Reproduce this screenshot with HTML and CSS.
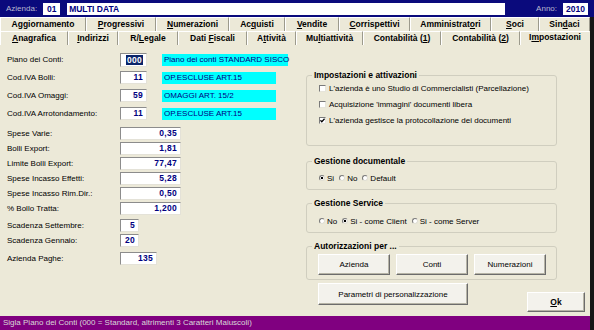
FILE: index.html
```html
<!DOCTYPE html>
<html lang="it">
<head>
<meta charset="utf-8">
<title>Impostazioni</title>
<link rel="stylesheet" href="styles.css">
</head>
<body>
<div class="app">
  <header class="topbar">
    <span class="tb-label">Azienda:</span>
    <span class="tb-box tb-code">01</span>
    <span class="tb-box tb-name">MULTI DATA</span>
    <span class="tb-label tb-anno">Anno:</span>
    <span class="tb-box tb-year">2010</span>
  </header>
  <div class="main">
    <nav class="tabs">
      <div class="tabrow r1">
        <span class="tab">Aggiornamento</span>
        <span class="tab"><u>P</u>rogressivi</span>
        <span class="tab"><u>N</u>umerazioni</span>
        <span class="tab">Ac<u>q</u>uisti</span>
        <span class="tab"><u>V</u>endite</span>
        <span class="tab"><u>C</u>orrispettivi</span>
        <span class="tab">Amministrat<u>o</u>ri</span>
        <span class="tab"><u>S</u>oci</span>
        <span class="tab">Sin<u>d</u>aci</span>
      </div>
      <div class="tabrow r2">
        <span class="tab"><u>A</u>nagrafica</span>
        <span class="tab"><u>I</u>ndirizzi</span>
        <span class="tab">R/<u>L</u>egale</span>
        <span class="tab">Dati <u>F</u>iscali</span>
        <span class="tab">A<u>t</u>tività</span>
        <span class="tab">Mu<u>l</u>tiattività</span>
        <span class="tab">Contabilità (<u>1</u>)</span>
        <span class="tab">Contabilità (<u>2</u>)</span>
        <span class="tab active">I<u>m</u>postazioni</span>
      </div>
    </nav>
    <main class="page">
      <section class="form">
        <div class="sec s1">
          <div class="row"><label>Piano dei Conti:</label><span class="fld w-code tall"><span class="hl">000</span></span><span class="desc long">Piano dei conti STANDARD SISCO</span></div>
          <div class="row"><label>Cod.IVA Bolli:</label><span class="fld w-code">11</span><span class="desc">OP.ESCLUSE ART.15</span></div>
          <div class="row"><label>Cod.IVA Omaggi:</label><span class="fld w-code">59</span><span class="desc">OMAGGI ART. 15/2</span></div>
          <div class="row"><label>Cod.IVA Arrotondamento:</label><span class="fld w-code">11</span><span class="desc">OP.ESCLUSE ART.15</span></div>
        </div>
        <div class="sec s2">
          <div class="row"><label>Spese Varie:</label><span class="fld w-amt">0,35</span></div>
          <div class="row"><label>Bolli Export:</label><span class="fld w-amt">1,81</span></div>
          <div class="row"><label>Limite Bolli Export:</label><span class="fld w-amt">77,47</span></div>
          <div class="row"><label>Spese Incasso Effetti:</label><span class="fld w-amt">5,28</span></div>
          <div class="row"><label>Spese Incasso Rim.Dir.:</label><span class="fld w-amt">0,50</span></div>
          <div class="row"><label>% Bollo Tratta:</label><span class="fld w-amt">1,200</span></div>
        </div>
        <div class="sec s3">
          <div class="row"><label>Scadenza Settembre:</label><span class="fld w-day">5</span></div>
          <div class="row"><label>Scadenza Gennaio:</label><span class="fld w-day">20</span></div>
        </div>
        <div class="sec s4">
          <div class="row"><label>Azienda Paghe:</label><span class="fld w-pag">135</span></div>
        </div>
      </section>
      <section class="side">
        <fieldset class="box b1">
          <legend>Impostazioni e attivazioni</legend>
          <div class="opts">
            <div class="chk"><span class="cb"></span>L'azienda è uno Studio di Commercialisti (Parcellazione)</div>
            <div class="chk"><span class="cb"></span>Acquisizione 'immagini' documenti libera</div>
            <div class="chk"><span class="cb"><svg width="5" height="5" viewBox="0 0 5 5"><path d="M0.4 2.3 L1.8 3.8 L4.6 0.8" stroke="#000" stroke-width="1.3" fill="none"/></svg></span>L'azienda gestisce la protocollazione dei documenti</div>
          </div>
        </fieldset>
        <fieldset class="box b2">
          <legend>Gestione documentale</legend>
          <div class="radios">
            <span class="rd"><span class="rb on"></span>Si</span>
            <span class="rd"><span class="rb"></span>No</span>
            <span class="rd"><span class="rb"></span>Default</span>
          </div>
        </fieldset>
        <fieldset class="box b3">
          <legend>Gestione Service</legend>
          <div class="radios">
            <span class="rd"><span class="rb"></span>No</span>
            <span class="rd"><span class="rb on"></span>Si - come Client</span>
            <span class="rd"><span class="rb"></span>Si - come Server</span>
          </div>
        </fieldset>
        <fieldset class="box b4">
          <legend>Autorizzazioni per ...</legend>
          <div class="btns">
            <button class="btn auth">Azienda</button>
            <button class="btn auth">Conti</button>
            <button class="btn auth">Numerazioni</button>
          </div>
        </fieldset>
        <div class="actions">
          <button class="btn param">Parametri di personalizzazione</button>
          <button class="btn ok"><u>O</u>k</button>
        </div>
      </section>
    </main>
    <footer class="status">Sigla Piano dei Conti (000 = Standard, altrimenti 3 Caratteri Maiuscoli)</footer>
  </div>
</div>
</body>
</html>
```
FILE: styles.css
```css
* { box-sizing: border-box; }
html, body { margin: 0; padding: 0; }
body {
  width: 594px;
  height: 330px;
  overflow: hidden;
  background: #ece9d8;
  font-family: "Liberation Sans", Arial, sans-serif;
  font-size: 8px;
  color: #000;
}
.app { display: flex; flex-direction: column; height: 330px; }

/* top bar */
.topbar {
  height: 17px;
  flex: none;
  background: #0a0a7c;
  display: flex;
  align-items: center;
  padding: 0 6px 0 6px;
}
.tb-label { color: #b8b8d0; font-size: 8px; }
.tb-box {
  background: #fff;
  color: #000080;
  font-weight: bold;
  font-size: 8.5px;
  height: 12px;
  line-height: 12px;
}
.tb-code { width: 17px; margin-left: 6px; text-align: center; }
.tb-name { width: 438px; margin-left: 7px; padding-left: 2px; }
.tb-anno { margin-left: auto; }
.tb-year { width: 25px; margin-left: 6px; text-align: center; }

/* main area */
.main {
  flex: 1;
  display: flex;
  flex-direction: column;
  border-right: 4px solid #161616;
  min-height: 0;
}

/* tabs */
.tabs { flex: none; height: 28px; }
.tabrow { display: flex; height: 14px; }
.tab {
  flex: none;
  text-align: center;
  font-weight: bold;
  font-size: 8.5px;
  line-height: 13px;
  border-top: 1px solid #fff;
  border-left: 1px solid #fff;
  border-right: 1px solid #9c9a8c;
  white-space: nowrap;
  overflow: hidden;
}
.tab:first-child { border-left-color: #fff; }
.r2 .tab { border-bottom: 0; }
.tab.active { line-height: 10px; border-right-color: #ece9d8; }
.r1 .tab:nth-child(1) { width: 86px; }
.r1 .tab:nth-child(2) { width: 70px; }
.r1 .tab:nth-child(3) { width: 73px; }
.r1 .tab:nth-child(4) { width: 56px; }
.r1 .tab:nth-child(5) { width: 54px; }
.r1 .tab:nth-child(6) { width: 71px; }
.r1 .tab:nth-child(7) { width: 81px; }
.r1 .tab:nth-child(8) { width: 48px; }
.r1 .tab:nth-child(9) { width: 51px; }
.r2 .tab:nth-child(1) { width: 68px; }
.r2 .tab:nth-child(2) { width: 50px; }
.r2 .tab:nth-child(3) { width: 60px; }
.r2 .tab:nth-child(4) { width: 69px; }
.r2 .tab:nth-child(5) { width: 49px; }
.r2 .tab:nth-child(6) { width: 67px; }
.r2 .tab:nth-child(7) { width: 78px; }
.r2 .tab:nth-child(8) { width: 79px; }
.r2 .tab:nth-child(9) { width: 70px; }

/* page */
.page { flex: 1; display: flex; min-height: 0; }
.form { width: 306px; flex: none; padding: 8px 0 0 7px; }
.row { display: flex; align-items: center; height: 13px; }
.row label { width: 113px; flex: none; }
.fld {
  height: 13px;
  background: #fff;
  border: 1px solid;
  border-color: #8c8c8c #e4e2d8 #e4e2d8 #8c8c8c;
  text-align: right;
  padding-right: 3px;
  font-weight: bold;
  color: #000080;
  font-size: 8.5px;
  line-height: 11px;
  letter-spacing: 0.3px;
}
.fld.tall { height: 14px; line-height: 12px; }
.hl { background: #0a246a; color: #fff; padding: 0 1px; }
.w-code { width: 27px; }
.w-amt { width: 61px; }
.w-day { width: 19px; }
.w-pag { width: 37px; }
.desc {
  margin-left: 15px;
  width: 114px;
  height: 12px;
  line-height: 12px;
  background: #00ffff;
  color: #000080;
  padding-left: 2px;
  white-space: nowrap;
}
.desc.long { width: 126px; }
.s1 .row + .row { margin-top: 5px; }
.s2 { margin-top: 7px; }
.s2 .row + .row { margin-top: 2px; }
.s3 { margin-top: 4px; }
.s3 .row + .row { margin-top: 2px; }
.s4 { margin-top: 5px; }

/* side column */
.side {
  flex: 1;
  padding: 25px 5px 0 0;
  display: flex;
  flex-direction: column;
}
.box {
  width: 251px;
  margin: 0;
  padding: 0;
  min-width: 0;
  border: 1px solid #d0cebf;
  border-radius: 3px;
}
.box legend {
  font-weight: bold;
  font-size: 8.5px;
  line-height: 10px;
  padding: 0 2px;
  margin-left: 5px;
}
.opts { padding: 0 0 17px 12px; }
.chk { display: flex; align-items: center; height: 16px; white-space: nowrap; }
.cb {
  width: 7px;
  height: 7px;
  flex: none;
  background: #fff;
  border: 1px solid;
  border-color: #7a7a7a #e6e4da #e6e4da #7a7a7a;
  margin-right: 3px;
  display: flex;
  align-items: center;
  justify-content: center;
}
.cb svg { display: block; }
.b2 { margin-top: 10px; }
.b3 { margin-top: 8px; }
.b4 { margin-top: 8px; }
.b2 .radios { padding: 6px 0 5px 12px; }
.b3 .radios { padding: 7px 0 5px 12px; }
.radios { display: flex; align-items: center; height: auto; }
.rd { display: flex; align-items: center; height: 12px; margin-right: 5px; white-space: nowrap; }
.rb {
  width: 6px;
  height: 6px;
  flex: none;
  border-radius: 50%;
  background: #fff;
  border: 1px solid;
  border-color: #7a7a7a #e0ded4 #e0ded4 #7a7a7a;
  margin-right: 2px;
}
.rb.on { background: radial-gradient(circle, #000 0 1.2px, #fff 1.6px); }

.btns { display: flex; gap: 6px; padding: 3px 0 4px 11px; }
.btn {
  font-family: "Liberation Sans", Arial, sans-serif;
  font-size: 8px;
  color: #000;
  background: #f3f2ec;
  border: 1px solid;
  border-color: #fff #6c6c6c #6c6c6c #fff;
  box-shadow: inset -1px -1px 0 #b6b4a6;
  padding: 0;
  margin: 0;
}
.auth { width: 72px; height: 21px; }
.actions { display: flex; align-items: flex-start; margin-top: 3px; }
.param { width: 150px; height: 22px; margin-left: 12px; }
.ok { width: 58px; height: 20px; margin-left: auto; margin-top: 9px; font-weight: bold; font-size: 8.5px; }

/* status */
.status {
  flex: none;
  height: 14px;
  line-height: 14px;
  background: #800080;
  color: #d8d8d8;
  padding-left: 3px;
  white-space: nowrap;
}
```
